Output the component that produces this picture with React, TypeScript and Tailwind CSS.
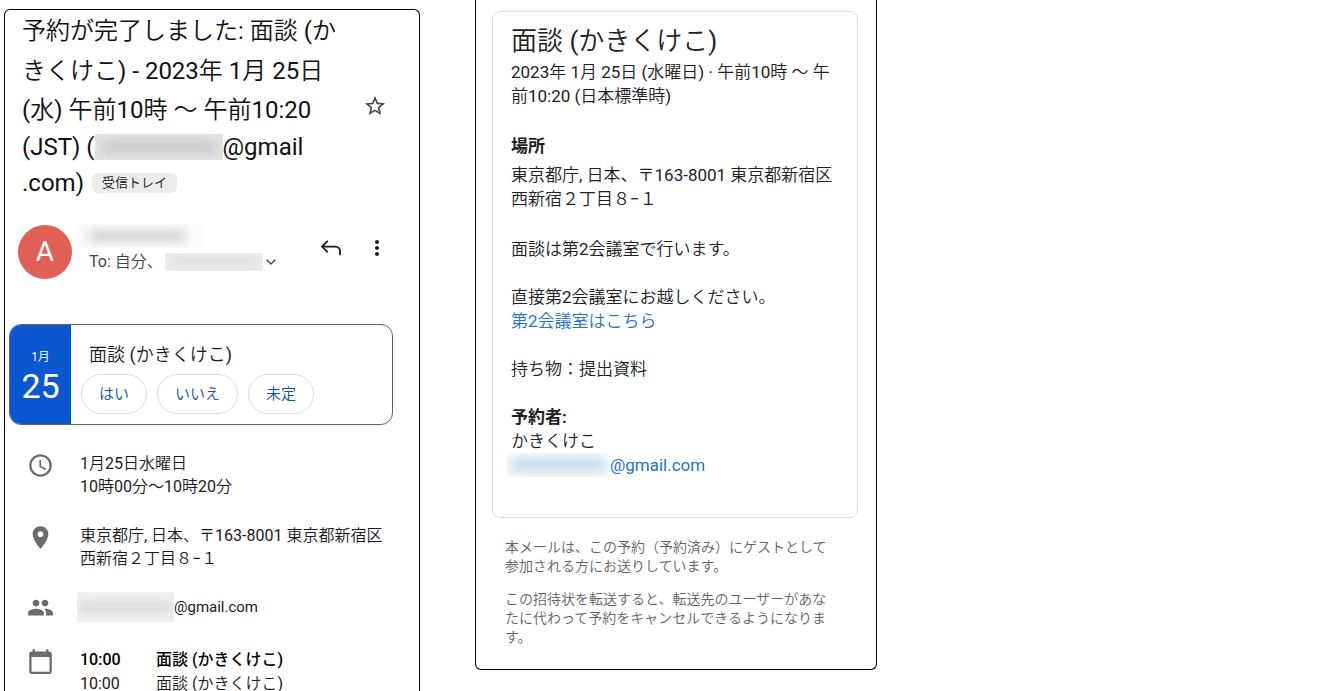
import type { ReactNode } from "react";
import {
  MdCalendarToday,
  MdMoreVert,
  MdPeople,
  MdPlace,
  MdSchedule,
  MdStarBorder,
} from "react-icons/md";
import { ChevronDown } from "lucide-react";
import { clsx } from "clsx";

const replies = ["はい", "いいえ", "未定"];

const schedule = [
  { time: "10:00", title: "面談 (かきくけこ)", isBold: true },
  { time: "10:00", title: "面談 (かきくけこ)", isBold: false },
];

// 個人情報を隠すぼかし
const Redacted = ({
  className,
  smudge,
}: {
  className: string;
  smudge: string;
}) => (
  <span
    aria-hidden="true"
    className={clsx(
      "inline-flex shrink-0 items-center overflow-hidden",
      className,
    )}
  >
    <span className={clsx("block blur-[6px]", smudge)} />
  </span>
);

const ReplyIcon = () => (
  <svg
    viewBox="0 0 24 24"
    className="h-6 w-6"
    fill="none"
    stroke="currentColor"
    strokeWidth="1.8"
  >
    <path d="M8.8 4.8 3 10.6l5.8 5.8" />
    <path d="M3.2 10.6H16.5a4.5 4.5 0 0 1 4.5 4.5v4.1" />
  </svg>
);

const DetailRow = ({
  icon,
  className,
  children,
}: {
  icon: ReactNode;
  className?: string;
  children: ReactNode;
}) => (
  <li className={clsx("flex", className)}>
    <span className="flex w-[70px] shrink-0 justify-center text-[#6b6b6b]">
      {icon}
    </span>
    <div className="min-w-0 pl-[5px]">{children}</div>
  </li>
);

const MailPanel = () => (
  <section className="mt-[9px] w-full max-w-[416px] shrink-0 self-stretch rounded-t-md border border-b-0 border-black text-[#1b1b1b]">
    <header className="flex items-center justify-between pl-[17px] pr-8 pt-px">
      <h1 className="whitespace-nowrap text-2xl font-normal text-[#111]">
        <span className="block leading-10">予約が完了しました: 面談 (か</span>
        <span className="block leading-10">きくけこ) - 2023年 1月 25日</span>
        <span className="block leading-[38px]">
          (水) 午前10時 ～ 午前10:20
        </span>
        <span className="flex items-center leading-9">
          (JST) (
          <Redacted
            className="h-[26px] w-[128px] bg-[#e4e4e4]"
            smudge="mx-2 h-3 w-full bg-[#c6c6c6]"
          />
          @gmail
        </span>
        <span className="flex items-center gap-2 leading-9">
          .com)
          <span className="rounded-md bg-[#ececec] px-2.5 text-[13px] leading-5">
            受信トレイ
          </span>
        </span>
      </h1>
      <button type="button" aria-label="スターを付ける" className="text-[#444]">
        <MdStarBorder className="h-6 w-6" />
      </button>
    </header>

    <div className="mt-[23px] flex items-start pl-[13px] pr-[30px]">
      <span className="mt-px flex h-[54px] w-[54px] shrink-0 items-center justify-center rounded-full bg-[#e06055] text-[28px] text-white">
        A
      </span>
      <div className="ml-[5px] grow">
        <Redacted
          className="h-6 w-[127px] bg-[#fcfcfc]"
          smudge="mx-3 h-3 w-24 bg-[#cfcfcf]"
        />
        <button
          type="button"
          className="ml-3 flex items-center whitespace-nowrap text-base leading-[26px] text-[#444]"
        >
          To: 自分、
          <Redacted
            className="ml-0.5 h-[18px] w-[98px] bg-[#efefef]"
            smudge="mx-1 h-2.5 w-full bg-[#dcdcdc]"
          />
          <ChevronDown className="h-4 w-4" />
        </button>
      </div>
      <div className="mt-3 flex gap-[22px]">
        <button type="button" aria-label="返信">
          <ReplyIcon />
        </button>
        <button type="button" aria-label="その他">
          <MdMoreVert className="h-6 w-6" />
        </button>
      </div>
    </div>

    {/* 招待カード */}
    <div className="ml-1 mr-[26px] mt-[45px] flex h-[101px] overflow-hidden rounded-xl border border-[#5f6368]">
      <div className="flex w-[61px] shrink-0 flex-col items-center justify-center bg-[#0b57d0] pt-1.5 text-white">
        <span className="text-xs leading-4">1月</span>
        <span className="text-[34px] leading-[42px]">25</span>
      </div>
      <div className="pl-2.5 pt-[18px]">
        <h2 className="pl-2 text-lg leading-6">面談 (かきくけこ)</h2>
        <div className="mt-[7px] flex gap-2.5">
          {replies.map((reply) => (
            <button
              key={reply}
              type="button"
              className="h-10 rounded-full border border-[#dcdcdc] px-[17px] text-[15px] text-[#0b4fb3]"
            >
              {reply}
            </button>
          ))}
        </div>
      </div>
    </div>

    <ul className="mt-[27px] whitespace-nowrap text-base leading-[23px]">
      <DetailRow icon={<MdSchedule className="h-[27px] w-[27px]" />}>
        1月25日水曜日
        <br />
        10時00分～10時20分
      </DetailRow>
      <DetailRow
        className="mt-[26px]"
        icon={<MdPlace className="h-[27px] w-[27px]" />}
      >
        東京都庁, 日本、〒163-8001 東京都新宿区
        <br />
        西新宿２丁目８−１
      </DetailRow>
      <DetailRow
        className="mt-[22px] items-center"
        icon={<MdPeople className="h-[27px] w-[27px]" />}
      >
        <span className="flex items-center text-[15px]">
          <Redacted
            className="-ml-[3px] h-[30px] w-[97px] bg-[#f3f3f3]"
            smudge="h-3 w-full bg-[#d8d8d8]"
          />
          @gmail.com
        </span>
      </DetailRow>
      <DetailRow
        className="mt-[26px]"
        icon={<MdCalendarToday className="h-[27px] w-[27px]" />}
      >
        <table className="leading-6">
          <tbody>
            {schedule.map((item) => (
              <tr
                key={String(item.isBold)}
                className={clsx(
                  item.isBold &&
                    "font-['Roboto','Noto_Sans_CJK_JP',sans-serif] font-medium text-black",
                )}
              >
                <td className="w-19 p-0">{item.time}</td>
                <td className="p-0">{item.title}</td>
              </tr>
            ))}
          </tbody>
        </table>
      </DetailRow>
    </ul>
  </section>
);

const ReservationPanel = () => (
  <section className="w-full max-w-[402px] shrink-0 rounded-b-md border border-t-0 border-black pb-[22px] pl-4 pr-[18px] pt-[11px]">
    <div className="whitespace-nowrap rounded-lg border border-[#dadce0] pb-10 pl-[18px] pt-2.5 text-[17px] leading-6 text-[#202124]">
      <h2 className="text-[26px] leading-[38px]">面談 (かきくけこ)</h2>
      <p>
        2023年 1月 25日 (水曜日) · 午前10時 ～ 午
        <br />
        前10:20 (日本標準時)
      </p>
      <h3 className="mt-[26px] font-['Roboto','Noto_Sans_CJK_JP',sans-serif] font-bold">
        場所
      </h3>
      <p className="mt-[5px]">
        東京都庁, 日本、〒163-8001 東京都新宿区
        <br />
        西新宿２丁目８−１
      </p>
      <p className="mt-[26px]">面談は第2会議室で行います。</p>
      <p className="mt-6">直接第2会議室にお越しください。</p>
      <a href="#room" className="block text-[#2673cf]">
        第2会議室はこちら
      </a>
      <p className="mt-6">持ち物：提出資料</p>
      <h3 className="mt-6 font-['Roboto','Noto_Sans_CJK_JP',sans-serif] font-bold">
        予約者:
      </h3>
      <p>かきくけこ</p>
      <a href="#mail" className="flex items-center text-[#2673cf]">
        <Redacted
          className="-ml-1 h-6 w-[103px] bg-[#f8fbfd]"
          smudge="mx-1 h-3 w-full bg-[#bfd6ea]"
        />
        @gmail.com
      </a>
    </div>
    <footer className="mt-5 space-y-3.5 whitespace-nowrap pl-[13px] text-sm leading-[19px] text-[#5f6368]">
      <p>
        本メールは、この予約（予約済み）にゲストとして
        <br />
        参加される方にお送りしています。
      </p>
      <p>
        この招待状を転送すると、転送先のユーザーがあな
        <br />
        たに代わって予約をキャンセルできるようになりま
        <br />
        す。
      </p>
    </footer>
  </section>
);

export default function App() {
  return (
    <main
      lang="ja"
      className="flex h-screen items-start gap-[55px] overflow-hidden bg-white pl-1 font-['Roboto','Noto_Sans_CJK_JP_DemiLight','Noto_Sans_CJK_JP',sans-serif]"
    >
      <MailPanel />
      <ReservationPanel />
    </main>
  );
}
